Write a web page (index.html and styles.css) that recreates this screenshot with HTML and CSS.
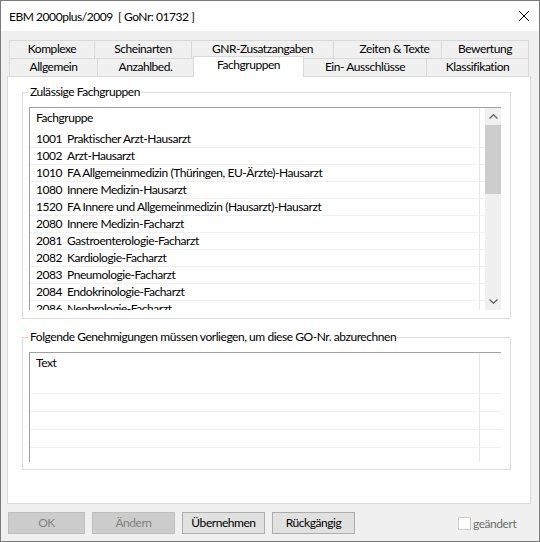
FILE: index.html
```html
<!DOCTYPE html>
<html lang="de">
<head>
  <meta charset="UTF-8" />
  <title>EBM 2000plus/2009</title>
  <link rel="stylesheet" href="styles.css">
</head>
<body>
  <div class="window">
    <div class="titlebar">
      <span class="title">EBM 2000plus/2009  [ GoNr: 01732 ]</span>
      <svg class="close" width="10" height="10" viewBox="0 0 10 10">
        <path d="M0 0 L10 10 M10 0 L0 10" stroke="#000" stroke-width="1" fill="none" />
      </svg>
    </div>

    <div class="client">
      <div class="tabs">
        <div class="tab-row">
          <div class="tab t-komplexe">Komplexe</div>
          <div class="tab t-scheinarten">Scheinarten</div>
          <div class="tab t-gnr">GNR-Zusatzangaben</div>
          <div class="tab t-zeiten">Zeiten &amp; Texte</div>
          <div class="tab t-bewertung">Bewertung</div>
        </div>
        <div class="tab-row">
          <div class="tab t-allgemein">Allgemein</div>
          <div class="tab t-anzahl">Anzahlbed.</div>
          <div class="tab t-fach active">Fachgruppen</div>
          <div class="tab t-ein">Ein- Ausschlüsse</div>
          <div class="tab t-klass">Klassifikation</div>
        </div>
      </div>

      <div class="panel">
        <div class="group group-fach">
          <div class="group-title">Zulässige Fachgruppen</div>
          <div class="listview list-fach">
            <div class="list-body">
              <div class="list-head">Fachgruppe</div>
              <div class="list-row"><span class="code">1001</span>Praktischer Arzt-Hausarzt</div>
              <div class="list-row"><span class="code">1002</span>Arzt-Hausarzt</div>
              <div class="list-row"><span class="code">1010</span>FA Allgemeinmedizin (Thüringen, EU-Ärzte)-Hausarzt</div>
              <div class="list-row"><span class="code">1080</span>Innere Medizin-Hausarzt</div>
              <div class="list-row"><span class="code">1520</span>FA Innere und Allgemeinmedizin (Hausarzt)-Hausarzt</div>
              <div class="list-row"><span class="code">2080</span>Innere Medizin-Facharzt</div>
              <div class="list-row"><span class="code">2081</span>Gastroenterologie-Facharzt</div>
              <div class="list-row"><span class="code">2082</span>Kardiologie-Facharzt</div>
              <div class="list-row"><span class="code">2083</span>Pneumologie-Facharzt</div>
              <div class="list-row"><span class="code">2084</span>Endokrinologie-Facharzt</div>
              <div class="list-row"><span class="code">2086</span>Nephrologie-Facharzt</div>
            </div>
            <div class="scrollbar">
              <div class="sb-btn">
                <svg width="9" height="5" viewBox="0 0 9 5"><polyline points="0.5,4.5 4.5,0.8 8.5,4.5" fill="none" stroke="#606060" stroke-width="1.3" /></svg>
              </div>
              <div class="sb-thumb"></div>
              <div class="sb-track"></div>
              <div class="sb-btn">
                <svg width="9" height="5" viewBox="0 0 9 5"><polyline points="0.5,0.5 4.5,4.2 8.5,0.5" fill="none" stroke="#606060" stroke-width="1.3" /></svg>
              </div>
            </div>
          </div>
        </div>

        <div class="group group-gen">
          <div class="group-title">Folgende Genehmigungen müssen vorliegen, um diese GO-Nr. abzurechnen</div>
          <div class="listview list-gen">
            <div class="list-body">
              <div class="list-head">Text</div>
              <div class="list-row tall"></div>
              <div class="list-row tall"></div>
              <div class="list-row tall"></div>
              <div class="list-row tall"></div>
              <div class="list-row tall"></div>
            </div>
          </div>
        </div>
      </div>

      <div class="buttons">
        <div class="btn btn-ok disabled">OK</div>
        <div class="btn disabled">Ändern</div>
        <div class="btn">Übernehmen</div>
        <div class="btn">Rückgängig</div>
        <div class="check">
          <span class="check-box"></span>
          <span class="check-label">geändert</span>
        </div>
      </div>
    </div>
  </div>
</body>
</html>
```

FILE: styles.css
```css
* {
  box-sizing: border-box;
}
body {
  margin: 0;
  font-family: Lato, 'Liberation Sans', sans-serif;
  font-size: 12px;
  letter-spacing: -0.45px;
  color: #000;
  background: #fff;
}
.window {
  width: 540px;
  height: 542px;
  border: 1px solid #7a7a7a;
  display: flex;
  flex-direction: column;
  background: #f0f0f0;
}
.titlebar {
  height: 30px;
  background: #fff;
  display: flex;
  align-items: center;
  justify-content: space-between;
  padding: 0 10px 0 8px;
}
.title {
  white-space: pre;
}

/* tabs */
.client {
  flex: 1;
  padding: 9px 8px 0 6px;
}
.tabs {
  margin-left: 2px;
}
.tab-row {
  display: flex;
  align-items: flex-start;
  height: 18px;
}
.tab {
  height: 18px;
  margin-left: -1px;
  border: 1px solid #d9d9d9;
  border-bottom: none;
  background: #f0f0f0;
  text-align: center;
  line-height: 16px;
  white-space: nowrap;
}
.tab:first-child {
  margin-left: 0;
}
.tab.active {
  position: relative;
  z-index: 1;
  height: 21px;
  margin-top: -2px;
  background: #fff;
}
.t-komplexe { width: 86px; }
.t-scheinarten { width: 98px; }
.t-gnr { width: 143px; }
.t-zeiten { width: 109px; padding-left: 14px; }
.t-bewertung { width: 88px; }
.t-allgemein { width: 89px; }
.t-anzahl { width: 97px; }
.t-fach { width: 111px; }
.t-ein { width: 124px; }
.t-klass { width: 103px; }

/* page */
.panel {
  width: 524px;
  height: 428px;
  background: #fff;
  border: 1px solid #d9d9d9;
  padding: 15px 0 0 14px;
}
.group {
  width: 489px;
  border: 1px solid #dcdcdc;
  padding: 0 0 0 6px;
}
.group-fach {
  height: 227px;
}
.group-gen {
  height: 133px;
  margin-top: 18px;
}
.group-title {
  width: max-content;
  margin-top: -9px;
  padding: 0 1px;
  background: #fff;
  line-height: 16px;
}
.listview {
  display: flex;
  width: 472px;
  margin-top: 7px;
  border-top: 1px solid #a0a0a0;
  border-left: 1px solid #a0a0a0;
  background: #fff;
}
.list-fach {
  height: 203px;
}
.list-gen {
  height: 110px;
}
.list-body {
  flex: 1;
  overflow: hidden;
  background: linear-gradient(#e5e5e5, #e5e5e5) no-repeat 449px 0 / 1px 100%;
}
.list-head {
  height: 23px;
  padding-left: 6px;
  line-height: 20px;
}
.list-row {
  display: flex;
  height: 17px;
  padding-left: 6px;
  border-bottom: 1px solid #f0f0f0;
  line-height: 16px;
  white-space: nowrap;
}
.list-row.tall {
  height: 18px;
}
.code {
  width: 31px;
}

/* scrollbar */
.scrollbar {
  width: 16px;
  display: flex;
  flex-direction: column;
  background: #f0f0f0;
}
.sb-btn {
  height: 17px;
  display: flex;
  align-items: center;
  justify-content: center;
}
.sb-thumb {
  height: 69px;
  background: #cdcdcd;
}
.sb-track {
  flex: 1;
}

/* buttons */
.buttons {
  display: flex;
  align-items: center;
  margin-top: 8px;
  padding-left: 1px;
}
.btn {
  width: 83px;
  height: 22px;
  margin-right: 7px;
  border: 1px solid #adadad;
  background: #e1e1e1;
  text-align: center;
  line-height: 20px;
}
.btn-ok {
  width: 77px;
}
.btn.disabled {
  border-color: #bfbfbf;
  background: #cccccc;
  color: #838383;
}
.check {
  display: flex;
  align-items: center;
  margin-left: 96px;
}
.check-box {
  width: 13px;
  height: 13px;
  border: 1px solid #cccccc;
  background: #fff;
}
.check-label {
  margin-left: 2px;
  color: #6d6d6d;
}
```
